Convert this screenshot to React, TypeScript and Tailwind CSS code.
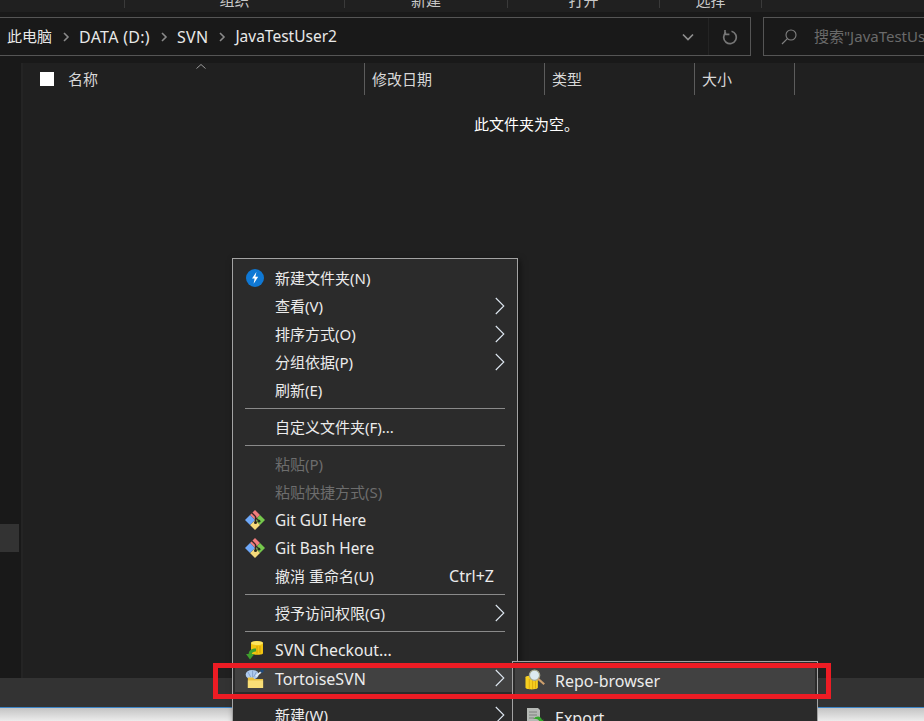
import type { ReactNode } from 'react';

const ribbonGroups = [
  { label: '', width: 'w-[125px]' },
  { label: '组织', width: 'w-[220px]' },
  { label: '新建', width: 'w-[163px]' },
  { label: '打开', width: 'w-[152px]' },
  { label: '选择', width: 'w-[102px]' },
];

const columns = [
  { label: '修改日期', width: 'w-[180px]' },
  { label: '类型', width: 'w-[150px]' },
  { label: '大小', width: 'w-[100px]' },
];

// Small chevron used between the path crumbs
const Crumb = () => (
  <svg width="8" height="10" viewBox="0 0 8 10" className="ml-[10px] mr-[9px]">
    <path d="M2 1l4 4-4 4" fill="none" stroke="#8a8a8a" strokeWidth="1.6" />
  </svg>
);

const SubArrow = () => (
  <svg width="10" height="18" viewBox="0 0 10 18" className="absolute right-[10px] top-[5px]">
    <path d="M0.8 1l8 8-8 8" fill="none" stroke="#dfe8f2" strokeWidth="1.1" />
  </svg>
);

const BoltIcon = () => (
  <svg width="18" height="18" viewBox="0 0 18 18">
    <circle cx="9" cy="9" r="9" fill="#0f78d4" />
    <path d="M10.4 3L6 9.6h2.6l-1 5.2 4.6-7H9.4z" fill="#fff" />
  </svg>
);

const GitIcon = () => (
  <svg width="20" height="20" viewBox="0 0 20 20">
    <path d="M10 0l5 5-5 5-5-5z" fill="#f07c7c" />
    <path d="M15 5l5 5-5 5-5-5z" fill="#76c84c" />
    <path d="M10 10l5 5-5 5-5-5z" fill="#f5da7a" />
    <path d="M5 5l5 5-5 5-5-5z" fill="#6ea8f8" />
    <path d="M6.5 2.5l4 4v5.5M10.5 7.5l3.5 3.5" fill="none" stroke="#3a2526" strokeWidth="1.3" />
    <circle cx="10.5" cy="12.6" r="1.5" fill="#29261c" />
    <circle cx="14" cy="11.2" r="1.4" fill="#24301c" />
  </svg>
);

const SvnIcon = () => (
  <svg width="20" height="20" viewBox="0 0 20 20">
    <path d="M6 3.2C6 0.8 18 0.8 18 3.2v10c0 2-12 2-12 0z" fill="#f2c411" />
    <ellipse cx="12" cy="3" rx="6" ry="2" fill="#ffe55f" />
    <path d="M12 6v7.5M15 6v7" stroke="#d49e05" strokeWidth="1" />
    <path d="M11 8.5C5.5 8.5 3.8 11 3.6 14H1l4 5.6L9.4 14H6.8c.1-1.5 1.6-2.6 4.2-2.6z" fill="#3f9f2d" />
  </svg>
);

const TortoiseIcon = () => (
  <svg width="21" height="21" viewBox="0 0 21 21">
    <ellipse cx="7.5" cy="6.5" rx="6.8" ry="5" fill="#aecbf0" />
    <path d="M3 3.5l3 5.5M8 2v7.5M12 3.5L9 9" stroke="#7f9bc6" strokeWidth="0.9" />
    <path d="M11.5 8l5.5-4.5" stroke="#e8edf2" strokeWidth="1.8" />
    <circle cx="17.8" cy="2.6" r="1.9" fill="#1f4a7c" />
    <path d="M3 9.5h5.5l1.3 1.5H19v9.5H3z" fill="#e9bf3f" />
    <path d="M3 12.5h16v8H3z" fill="#f9de76" />
  </svg>
);

const RepoIcon = () => (
  <svg width="21" height="22" viewBox="0 0 21 22">
    <path d="M0.5 8C0.5 6 13.5 6 13.5 8v11c0 2.6-13 2.6-13 0z" fill="#f6cf20" />
    <path d="M4.5 10v10.4M8 10v10.6M11 10v10" stroke="#dca80a" strokeWidth="0.9" />
    <circle cx="10" cy="6" r="5.4" fill="#dcebf0" stroke="#a6a88c" strokeWidth="1.4" />
    <path d="M13.8 9.8l6.4 5.6" stroke="#cc9f6d" strokeWidth="2.2" />
  </svg>
);

const ExportIcon = () => (
  <svg width="20" height="20" viewBox="0 0 20 20">
    <path d="M2 1h11l2 2v15H2z" fill="#b5b9b5" />
    <path d="M4 5h8M4 8h8M4 11h5" stroke="#7c807c" strokeWidth="1" />
    <path d="M8 12c4-4 8-3 9 1l1.6-.4-1.6 5-4-2.6 1.6-.5c-1-2-3.6-3-6.6-2.5z" fill="#35a92e" />
  </svg>
);

const MenuRow = ({
  label,
  icon,
  arrow,
  disabled,
  shortcut,
  active,
  labelClass = '',
}: {
  label: string;
  icon?: ReactNode;
  arrow?: boolean;
  disabled?: boolean;
  shortcut?: string;
  active?: boolean;
  labelClass?: string;
}) => (
  <div
    className={`relative flex h-[28px] items-center pl-[40px] pr-[21px] ${active ? 'bg-[#414141]' : ''} ${
      disabled ? 'text-[#6d6d6d]' : 'text-[#ececec]'
    }`}
  >
    {icon && <span className="absolute left-[10px] top-1/2 flex h-[22px] w-[20px] -translate-y-1/2 items-center justify-center">{icon}</span>}
    <span className={`whitespace-nowrap pt-[1px] ${labelClass}`}>{label}</span>
    {shortcut && <span className="ml-auto whitespace-nowrap text-[16px]">{shortcut}</span>}
    {arrow && <SubArrow />}
  </div>
);

const MenuLine = () => <div className="mx-[10px] my-[4px] h-px bg-[#8a8a8a]" />;

export default function App() {
  return (
    <div className="relative flex h-[721px] w-[924px] flex-col overflow-hidden bg-[#191919] font-['Noto_Sans','Noto_Sans_CJK_SC',sans-serif] text-[15px] text-[#e8e8e8]">
      {/* Ribbon, only its bottom edge is in the shot */}
      <div className="flex h-[12px] shrink-0 bg-[#202020]">
        {ribbonGroups.map((group) => (
          <div
            key={group.width}
            className={`flex h-[8px] items-end justify-center overflow-hidden border-r border-[#3a3a3a] text-[#c8c8c8] ${group.width}`}
          >
            <span className="shrink-0 leading-[20px] translate-y-[2px]">{group.label}</span>
          </div>
        ))}
      </div>

      {/* Address and search */}
      <div className="flex h-[51px] shrink-0 items-start pt-[5px]">
        <div className="flex h-[39px] w-[751px] items-center border border-l-0 border-[#555] bg-[#191919] pl-[7px]">
          <span>此电脑</span>
          <Crumb />
          <span className="text-[16px] tracking-[0.3px]">DATA (D:)</span>
          <Crumb />
          <span className="text-[16px] tracking-[0.3px]">SVN</span>
          <Crumb />
          <span className="text-[15.5px]">JavaTestUser2</span>
          <svg width="12" height="8" viewBox="0 0 12 8" className="ml-auto mr-[14px]">
            <path d="M1 1.5l5 5 5-5" fill="none" stroke="#8f8f8f" strokeWidth="1.7" />
          </svg>
          <div className="flex h-full w-[42px] items-center justify-center border-l border-[#242424]">
            <svg width="16" height="16" viewBox="0 0 16 16">
              <path d="M9.5 2.2A6.3 6.3 0 1 1 4 3.4" fill="none" stroke="#777" strokeWidth="1.7" />
              <path d="M3 1v4.4h4.4" fill="none" stroke="#777" strokeWidth="1.6" />
            </svg>
          </div>
        </div>
        <div className="ml-[12px] flex h-[39px] flex-1 items-center overflow-hidden border border-r-0 border-[#555] pl-[17px] text-[#6a6a6a]">
          <svg width="16" height="16" viewBox="0 0 16 16" className="shrink-0">
            <circle cx="10" cy="6" r="5" fill="none" stroke="#808080" strokeWidth="1.1" />
            <path d="M6.4 9.6L1 15" stroke="#808080" strokeWidth="1.2" />
          </svg>
          <span className="ml-[17px] whitespace-nowrap">搜索"JavaTestUser2"</span>
        </div>
      </div>

      {/* Sidebar and file list */}
      <div className="flex min-h-0 flex-1">
        <div className="flex w-[23px] shrink-0 border-r-[2px] border-[#242424]">
          <div className="mt-[461px] h-[28px] w-[19px] bg-[#333]" />
        </div>
        <div className="relative flex-1 bg-[#202020]">
          <svg width="10" height="5" viewBox="0 0 10 5" className="absolute left-[173px] top-[1px]">
            <path d="M0.5 4.5L5 0.5l4.5 4" fill="none" stroke="#9a9a9a" />
          </svg>
          <div className="flex h-[32px]">
            <div className="flex w-[342px] items-center border-r border-[#5c5c5c] pl-[17px]">
              <div className="h-[14px] w-[14px] bg-white" />
              <span className="ml-[14px] text-[#d8d8d8]">名称</span>
            </div>
            {columns.map((col) => (
              <div
                key={col.label}
                className={`flex items-center border-r border-[#5c5c5c] pl-[7px] text-[#d8d8d8] ${col.width}`}
              >
                {col.label}
              </div>
            ))}
          </div>
          <p className="mt-[18px] pl-[451px] leading-[22px] text-white">此文件夹为空。</p>
        </div>
      </div>

      {/* Status bar and the window below */}
      <div className="h-[29px] shrink-0 bg-[#333]" />
      <div className="h-[14px] shrink-0 border-t-[1.5px] border-[#3d84c6] bg-gradient-to-b from-[#c4c4c4] to-[#ececec]" />

      {/* Context menu */}
      <div className="absolute left-[232px] top-[258px] w-[286px] border border-[#a3a3a3] bg-[#2b2b2b] px-[2px] py-[5px] shadow-[2px_2px_6px_rgba(0,0,0,0.5)]">
        <MenuRow label="新建文件夹(N)" icon={<BoltIcon />} />
        <MenuRow label="查看(V)" arrow />
        <MenuRow label="排序方式(O)" arrow />
        <MenuRow label="分组依据(P)" arrow />
        <MenuRow label="刷新(E)" />
        <MenuLine />
        <MenuRow label="自定义文件夹(F)..." />
        <MenuLine />
        <MenuRow label="粘贴(P)" disabled />
        <MenuRow label="粘贴快捷方式(S)" disabled />
        <MenuRow label="Git GUI Here" icon={<GitIcon />} labelClass="text-[15.4px]" />
        <MenuRow label="Git Bash Here" icon={<GitIcon />} labelClass="text-[15.4px]" />
        <MenuRow label="撤消 重命名(U)" shortcut="Ctrl+Z" />
        <MenuLine />
        <MenuRow label="授予访问权限(G)" arrow />
        <MenuLine />
        <MenuRow label="SVN Checkout..." icon={<SvnIcon />} labelClass="text-[15.8px]" />
        <MenuRow label="TortoiseSVN" icon={<TortoiseIcon />} arrow active labelClass="text-[16px]" />
        <MenuLine />
        <MenuRow label="新建(W)" arrow />
      </div>

      {/* TortoiseSVN submenu */}
      <div className="absolute left-[512px] top-[661px] w-[306px] border border-[#a3a3a3] bg-[#2b2b2b] px-[2px] py-[4px]">
        <MenuRow label="Repo-browser" icon={<RepoIcon />} active labelClass="text-[16px]" />
        <MenuLine />
        <MenuRow label="Export" icon={<ExportIcon />} labelClass="text-[16px]" />
      </div>

      {/* Red annotation box */}
      <div className="absolute left-[213px] top-[663px] h-[36px] w-[618px] border-[5px] border-[#ed1c24]" />
    </div>
  );
}
